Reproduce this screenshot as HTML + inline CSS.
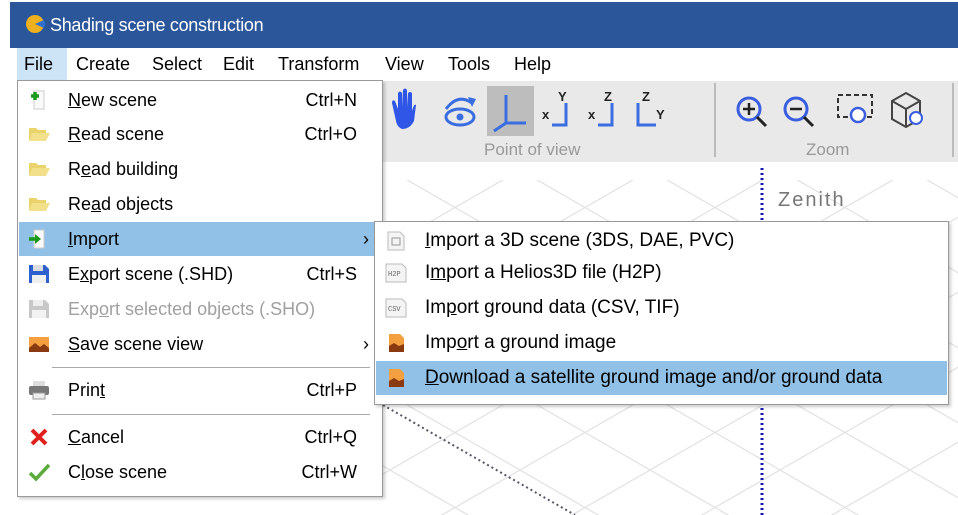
<!DOCTYPE html>
<html><head><meta charset="utf-8"><style>
*{margin:0;padding:0;box-sizing:border-box}
body{width:958px;height:515px;overflow:hidden;background:#fff;font-family:"Segoe UI","Liberation Sans",sans-serif;position:relative;color:#000}
.abs{position:absolute}
#title{left:10px;top:2px;width:948px;height:46px;background:#2b579a;color:#fff;font-size:18px;line-height:46px;padding-left:40px;letter-spacing:-0.3px}
#menubar{left:10px;top:48px;width:948px;height:33px;background:#fff;font-size:18px;line-height:33px}
#menubar span{position:absolute;top:0}
#tool{left:380px;top:81px;width:578px;height:81px;background:#e9e9e9}
.menu{background:#fff;border:1px solid #999;box-shadow:2px 2px 3px rgba(0,0,0,.2)}
.it{position:absolute;left:1px;right:1px;height:34px;font-size:18px;line-height:34px}
.it .t{position:absolute;left:49px}
.it .k{position:absolute;right:24px}
.sub .it{font-size:19px}
.hl{background:#91c1e7}
.dis{color:#a0a0a0}
.sep{position:absolute;left:34px;right:12px;height:1px;background:#aaa}
.ic{position:absolute;left:9px;top:7px;width:22px;height:20px}
u{text-decoration:underline}
</style></head><body>
<svg class="abs" style="left:0;top:160px" width="958" height="355">
<defs><pattern id="g" width="130" height="75" patternUnits="userSpaceOnUse" x="0" y="10">
<path d="M0 0L130 75M130 0L0 75" stroke="#e2e2e2" stroke-width="1.2" fill="none"/></pattern></defs>
<rect x="380" y="20" width="578" height="335" fill="url(#g)"/>
<line x1="762" y1="8" x2="762" y2="355" stroke="#1515b0" stroke-width="3" stroke-dasharray="2,3"/>
<line x1="383" y1="245" x2="575" y2="355" stroke="#556" stroke-width="2" stroke-dasharray="2,3"/>
<text x="778" y="46" font-size="20" fill="#777" font-family="Liberation Sans" letter-spacing="2">Zenith</text>
</svg>
<div id="title" class="abs"><svg class="abs" style="left:14px;top:11px" width="22" height="22"><circle cx="11" cy="11" r="9" fill="#f0b020"/><path d="M11 11L20 7A9 9 0 0 1 20 15Z" fill="#3070d0"/></svg>Shading scene construction</div>
<div id="menubar" class="abs">
<span style="left:7px;width:50px;background:#cde4f7;padding-left:7px">File</span>
<span style="left:66px">Create</span><span style="left:142px">Select</span><span style="left:213px">Edit</span><span style="left:268px">Transform</span><span style="left:375px">View</span><span style="left:438px">Tools</span><span style="left:504px">Help</span>
</div>
<div id="tool" class="abs">
<svg width="578" height="81" font-family="Liberation Sans">
<rect x="107" y="5" width="47" height="50" fill="#bdbdbd"/>
<path d="M16 40 L12 22 Q12 18 15 20 L18 28 L18 12 Q20 9 22 12 L22 26 L23 9 Q25 6 27 9 L27 26 L28 12 Q30 10 32 12 L32 30 Q34 22 36 24 L34 40 Q30 48 22 48 Q17 46 16 40Z" fill="#2f56e6"/>
<ellipse cx="80" cy="36" rx="14" ry="8" fill="none" stroke="#3a6de0" stroke-width="3"/><circle cx="80" cy="36" r="3.5" fill="#3a6de0"/><path d="M66 28 Q78 12 92 22" fill="none" stroke="#3a6de0" stroke-width="3"/><path d="M88 16L96 18L92 26Z" fill="#3a6de0"/>
<path d="M126 14V42H146M126 42L114 50" fill="none" stroke="#3a6de0" stroke-width="3"/>
<g font-size="13" font-weight="bold" fill="#222"><text x="162" y="38">x</text><text x="178" y="20">Y</text><text x="208" y="38">x</text><text x="224" y="20">Z</text><text x="262" y="20">Z</text><text x="276" y="38">Y</text></g>
<path d="M172 44H186V22" fill="none" stroke="#3a6de0" stroke-width="3"/>
<path d="M218 44H232V22" fill="none" stroke="#3a6de0" stroke-width="3"/>
<path d="M258 22V44H276" fill="none" stroke="#3a6de0" stroke-width="3"/>
<text x="104" y="74" font-size="17" fill="#999">Point of view</text>
<line x1="335" y1="2" x2="335" y2="76" stroke="#bbb" stroke-width="2"/>
<g fill="none" stroke-width="3"><circle cx="369" cy="28" r="11" stroke="#3a5ee0"/><line x1="377" y1="36" x2="386" y2="45" stroke="#222"/><circle cx="416" cy="28" r="11" stroke="#3a5ee0"/><line x1="424" y1="36" x2="433" y2="45" stroke="#222"/></g>
<path d="M363 28H375M369 22V34M410 28H422" stroke="#222" stroke-width="2.5"/>
<rect x="458" y="14" width="34" height="22" fill="none" stroke="#333" stroke-width="2" stroke-dasharray="5,3"/><circle cx="478" cy="34" r="7" fill="#fff" stroke="#3a5ee0" stroke-width="2.5"/>
<path d="M512 20L526 12L540 20V38L526 46L512 38Z M512 20L526 28L540 20M526 28V46" fill="none" stroke="#444" stroke-width="2"/><circle cx="536" cy="37" r="6" fill="#fff" stroke="#3a5ee0" stroke-width="2"/>
<text x="426" y="74" font-size="17" fill="#999">Zoom</text>
<line x1="573" y1="2" x2="573" y2="76" stroke="#bbb" stroke-width="2"/>
</svg></div>

<div class="abs menu" style="left:17px;top:80px;width:366px;height:417px">
<div class="it" style="top:2px"><svg class="ic" viewBox="0 0 22 20"><path d="M6 1H16V19H6Z" fill="#fafafa" stroke="#ccc"/><path d="M3 6H11M7 2V10" stroke="#1a9a1a" stroke-width="3.5"/></svg><span class="t"><u>N</u>ew scene</span><span class="k">Ctrl+N</span></div>
<div class="it" style="top:36px"><svg class="ic" viewBox="0 0 22 20"><path d="M1 4H8L10 6H18V16H1Z" fill="#e9d36a"/><path d="M4 9H22L18 17H1Z" fill="#f2e08a"/></svg><span class="t"><u>R</u>ead scene</span><span class="k">Ctrl+O</span></div>
<div class="it" style="top:71px"><svg class="ic" viewBox="0 0 22 20"><path d="M1 4H8L10 6H18V16H1Z" fill="#e9d36a"/><path d="M4 9H22L18 17H1Z" fill="#f2e08a"/></svg><span class="t">R<u>e</u>ad building</span></div>
<div class="it" style="top:106px"><svg class="ic" viewBox="0 0 22 20"><path d="M1 4H8L10 6H18V16H1Z" fill="#e9d36a"/><path d="M4 9H22L18 17H1Z" fill="#f2e08a"/></svg><span class="t">Re<u>a</u>d objects</span></div>
<div class="it hl" style="top:141px"><svg class="ic" viewBox="0 0 22 20"><path d="M6 1H16V19H6Z" fill="#fafafa" stroke="#ccc"/><path d="M1 10H8" stroke="#1a9a1a" stroke-width="3.5"/><path d="M7 5L13 10L7 15Z" fill="#1a9a1a"/></svg><span class="t"><u>I</u>mport</span><span class="k" style="right:12px">›</span></div>
<div class="it" style="top:176px"><svg class="ic" viewBox="0 0 22 20"><path d="M1 1H17L21 5V19H1Z" fill="#2d5fcf"/><rect x="5" y="1" width="10" height="6" fill="#ddd"/><rect x="4" y="11" width="14" height="8" fill="#eee"/></svg><span class="t">E<u>x</u>port scene (.SHD)</span><span class="k">Ctrl+S</span></div>
<div class="it dis" style="top:211px"><svg class="ic" viewBox="0 0 22 20"><path d="M1 1H17L21 5V19H1Z" fill="#c8c8c8"/><rect x="5" y="1" width="10" height="6" fill="#eee"/><rect x="4" y="11" width="14" height="8" fill="#f2f2f2"/></svg><span class="t">Exp<u>o</u>rt selected objects (.SHO)</span></div>
<div class="it" style="top:246px"><svg class="ic" viewBox="0 0 22 20"><rect x="1" y="3" width="20" height="15" fill="#f5a040"/><path d="M1 14L7 9L12 13L16 10L21 14V18H1Z" fill="#8a3a10"/></svg><span class="t"><u>S</u>ave scene view</span><span class="k" style="right:12px">›</span></div>
<div class="sep" style="top:286px"></div>
<div class="it" style="top:292px"><svg class="ic" viewBox="0 0 22 20"><rect x="5" y="1" width="12" height="6" fill="#ddd"/><rect x="1" y="6" width="20" height="9" rx="2" fill="#777"/><rect x="5" y="13" width="12" height="6" fill="#eee" stroke="#999"/></svg><span class="t">Prin<u>t</u></span><span class="k">Ctrl+P</span></div>
<div class="sep" style="top:333px"></div>
<div class="it" style="top:339px"><svg class="ic" viewBox="0 0 22 20"><path d="M4 3L18 17M18 3L4 17" stroke="#e0201c" stroke-width="4"/></svg><span class="t"><u>C</u>ancel</span><span class="k">Ctrl+Q</span></div>
<div class="it" style="top:374px"><svg class="ic" viewBox="0 0 22 20"><path d="M2 11L8 17L21 3" stroke="#5aaa3c" stroke-width="3.5" fill="none"/></svg><span class="t">C<u>l</u>ose scene</span><span class="k">Ctrl+W</span></div>
</div>

<div class="abs menu sub" style="left:374px;top:221px;width:575px;height:184px">
<div class="it" style="top:2px"><svg class="ic" viewBox="0 0 22 20"><path d="M3 1H15L19 5V19H3Z" fill="#f4f4f4" stroke="#bbb"/><rect x="7" y="7" width="8" height="7" fill="none" stroke="#999"/></svg><span class="t"><u>I</u>mport a 3D scene (3DS, DAE, PVC)</span></div>
<div class="it" style="top:34px"><svg class="ic" viewBox="0 0 22 20"><path d="M1 1H17L21 5V19H1Z" fill="#f4f4f4" stroke="#bbb"/><text x="3" y="13" font-size="7" font-family="Liberation Mono" fill="#666">H2P</text></svg><span class="t">I<u>m</u>port a Helios3D file (H2P)</span></div>
<div class="it" style="top:69px"><svg class="ic" viewBox="0 0 22 20"><path d="M1 1H17L21 5V19H1Z" fill="#f4f4f4" stroke="#bbb"/><text x="3" y="13" font-size="7" font-family="Liberation Mono" fill="#666">CSV</text></svg><span class="t">Im<u>p</u>ort ground data (CSV, TIF)</span></div>
<div class="it" style="top:104px"><svg class="ic" viewBox="0 0 22 20"><path d="M4 1H15L19 5V19H4Z" fill="#f5a040"/><path d="M4 13L9 10L14 13L19 11V19H4Z" fill="#8a3a10"/></svg><span class="t">Imp<u>o</u>rt a ground image</span></div>
<div class="it hl" style="top:139px"><svg class="ic" viewBox="0 0 22 20"><path d="M4 1H15L19 5V19H4Z" fill="#f5a040"/><path d="M4 13L9 10L14 13L19 11V19H4Z" fill="#8a3a10"/></svg><span class="t"><u>D</u>ownload a satellite ground image and/or ground data</span></div>
</div>
</body></html>
